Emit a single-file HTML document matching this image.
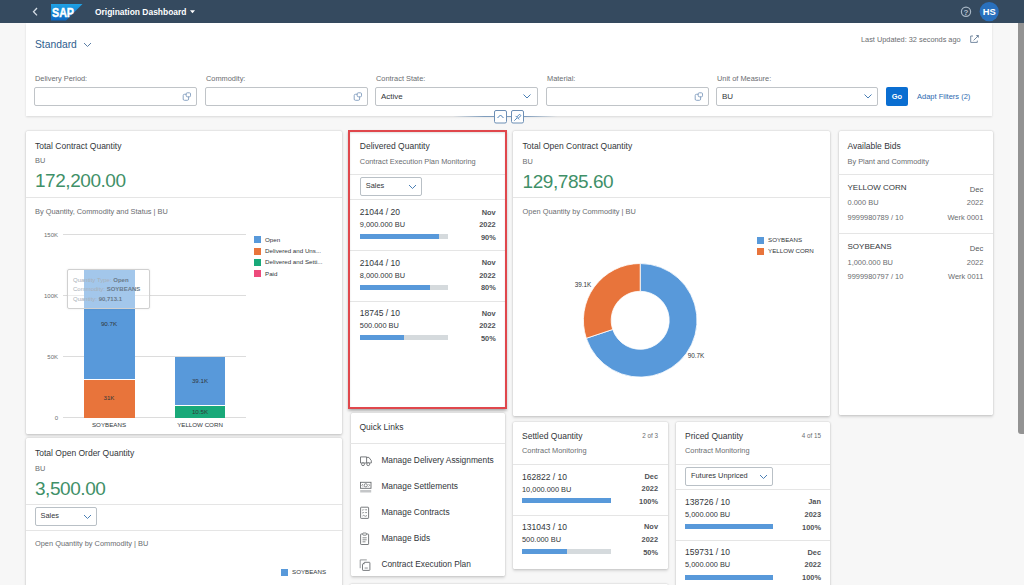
<!DOCTYPE html>
<html><head><meta charset="utf-8">
<style>
*{box-sizing:border-box;margin:0;padding:0}
html,body{width:1024px;height:585px;overflow:hidden}
body{background:#f7f7f7;font-family:"Liberation Sans",sans-serif;color:#32363a;position:relative}
.a{position:absolute}
.hdr{left:0;top:0;width:1024px;height:23px;background:#354a5f}
.fb{left:26px;top:23px;width:966px;height:93px;background:#fff;box-shadow:0 1px 2px rgba(0,0,0,.12)}
.sb{left:1018px;top:23px;width:6px;height:411px;background:#939393;border-bottom-left-radius:3px}
.card{position:absolute;background:#fff;border-radius:1.5px;box-shadow:0 0 2px rgba(0,0,0,.2),0 1.5px 3px rgba(0,0,0,.13)}
.lbl{font-size:7.4px;color:#6a6d70}
.inp{position:absolute;height:19px;border:1px solid #c0c4c8;background:#fff;border-radius:2px}
.t{position:absolute;white-space:nowrap}
.title{font-size:9px;color:#32363a}
.sub{font-size:7.5px;color:#6a6d70}
.kpi{font-size:19px;color:#3c9a63}
.sep{position:absolute;height:1px;background:#e5e5e5}
</style></head><body>
<div class="a hdr"></div>
<svg class="a" style="left:0;top:0" width="1024" height="23">
<polyline points="37,8 33.5,11.7 37,15.4" fill="none" stroke="#d5dde5" stroke-width="1.3"/>
<defs><linearGradient id="sapg" x1="0" y1="0" x2="0" y2="1"><stop offset="0" stop-color="#1fa3e6"/><stop offset="1" stop-color="#0d67c2"/></linearGradient></defs>
<polygon points="51,4 82.5,4 66,20.6 51,20.6" fill="url(#sapg)"/>
<text x="52" y="17" font-family="Liberation Sans" font-weight="bold" font-size="13" fill="#fff" textLength="22" lengthAdjust="spacingAndGlyphs" stroke="#fff" stroke-width="0.45">SAP</text>
<text x="95" y="14.5" font-family="Liberation Sans" font-weight="bold" font-size="8.45" fill="#ffffff">Origination Dashboard</text>
<polygon points="190,10.3 195,10.3 192.5,13.3" fill="#fff"/>
<circle cx="966" cy="11.7" r="4.6" fill="none" stroke="#a9b8c6" stroke-width="1.2"/>
<text x="966" y="14.6" text-anchor="middle" font-family="Liberation Sans" font-weight="bold" font-size="8" fill="#b5c2cf">?</text>
<circle cx="989.2" cy="11.6" r="9.6" fill="#2970bd"/>
<text x="989.2" y="15.1" text-anchor="middle" font-family="Liberation Sans" font-weight="bold" font-size="9.4" fill="#fff">HS</text>
</svg>
<div class="a fb"></div>
<div class="t" style="left:35px;top:39px;font-size:10.3px;color:#2e5d8e">Standard</div>
<svg class="a" style="left:83px;top:42px" width="10" height="6"><polyline points="1,1 4.5,4.5 8,1" fill="none" stroke="#5b7ea6" stroke-width="1"/></svg>
<div class="t" style="left:861px;top:35px;font-size:7.35px;color:#6a6d70">Last Updated: 32 seconds ago</div>
<svg class="a" style="left:969px;top:34px" width="12" height="11"><path d="M4,2 H1.7 V8.4 H8.3 V6.6" fill="none" stroke="#5f7691" stroke-width="0.85"/><path d="M4.6,6.4 L8.6,2.4" stroke="#5f7691" stroke-width="0.85"/><polygon points="6.8,1.3 9.8,1.1 9.6,4.1" fill="#5f7691"/></svg>
<div class="t lbl" style="left:35px;top:74px">Delivery Period:</div>
<div class="t lbl" style="left:206px;top:74px">Commodity:</div>
<div class="t lbl" style="left:376px;top:74px">Contract State:</div>
<div class="t lbl" style="left:547px;top:74px">Material:</div>
<div class="t lbl" style="left:717px;top:74px">Unit of Measure:</div>
<div class="inp" style="left:34px;top:87px;width:163px"></div>
<div class="inp" style="left:205px;top:87px;width:163px"></div>
<div class="inp" style="left:375px;top:87px;width:163px"></div>
<div class="inp" style="left:546px;top:87px;width:163px"></div>
<div class="inp" style="left:716px;top:87px;width:162px"></div>
<svg class="a" style="left:181px;top:90px" width="12" height="12"><rect x="2.2" y="4.3" width="5.4" height="6" rx="1.2" fill="none" stroke="#7f9bbd" stroke-width="0.9"/><rect x="5.2" y="2.8" width="4.3" height="4" rx="1" fill="#fff" stroke="#7f9bbd" stroke-width="0.9"/></svg>
<svg class="a" style="left:352px;top:90px" width="12" height="12"><rect x="2.2" y="4.3" width="5.4" height="6" rx="1.2" fill="none" stroke="#7f9bbd" stroke-width="0.9"/><rect x="5.2" y="2.8" width="4.3" height="4" rx="1" fill="#fff" stroke="#7f9bbd" stroke-width="0.9"/></svg>
<svg class="a" style="left:693px;top:90px" width="12" height="12"><rect x="2.2" y="4.3" width="5.4" height="6" rx="1.2" fill="none" stroke="#7f9bbd" stroke-width="0.9"/><rect x="5.2" y="2.8" width="4.3" height="4" rx="1" fill="#fff" stroke="#7f9bbd" stroke-width="0.9"/></svg>
<svg class="a" style="left:522px;top:93px" width="10" height="7"><polyline points="1.5,1.5 5,5 8.5,1.5" fill="none" stroke="#4a7fb5" stroke-width="1"/></svg>
<svg class="a" style="left:863px;top:93px" width="10" height="7"><polyline points="1.5,1.5 5,5 8.5,1.5" fill="none" stroke="#4a7fb5" stroke-width="1"/></svg>
<div class="t" style="left:381px;top:92px;font-size:8px;color:#32363a">Active</div>
<div class="t" style="left:722px;top:92px;font-size:8px;color:#32363a">BU</div>
<div class="a" style="left:886px;top:87px;width:22px;height:19px;background:#0a6ed1;border-radius:2px;color:#fff;font-size:7.5px;font-weight:bold;text-align:center;line-height:19px">Go</div>
<div class="t" style="left:917px;top:92px;font-size:7.5px;color:#2d6ab0">Adapt Filters (2)</div>
<div class="a" style="left:453px;top:116px;width:104px;height:1.2px;background:linear-gradient(90deg,rgba(120,150,185,0),#7f9dbd 30%,#7f9dbd 70%,rgba(120,150,185,0))"></div>
<svg class="a" style="left:494px;top:110px" width="32" height="14"><rect x="0.5" y="0.5" width="12" height="12.5" rx="1.5" fill="#fff" stroke="#6d8fb5" stroke-width="1"/><polyline points="3.5,8 6.5,5 9.5,8" fill="none" stroke="#4a7fb5" stroke-width="1"/><rect x="17.5" y="0.5" width="12" height="12.5" rx="1.5" fill="#fff" stroke="#6d8fb5" stroke-width="1"/><path d="M20.3,10.7 L23,8" stroke="#4a7fb5" stroke-width="0.9"/><path d="M21.6,5.9 L25.1,9.4" stroke="#4a7fb5" stroke-width="0.9"/><path d="M22.8,7 L25.6,4.2 L27,5.6 L24.1,8.3" fill="none" stroke="#4a7fb5" stroke-width="0.9"/></svg>

<div class="a sb"></div>

<div class="card" style="left:26px;top:131px;width:316px;height:303px"></div>
<div class="t" style="top:142.15px;font-size:8.5px;line-height:8.5px;color:#32363a;left:35px;">Total Contract Quantity</div>
<div class="t" style="top:157.30px;font-size:7.4px;line-height:7.4px;color:#6a6d70;left:35px;">BU</div>
<div class="t" style="top:171.40px;font-size:19px;line-height:19px;color:#3f9068;left:35px;letter-spacing:-0.45px;">172,200.00</div>
<div class="a" style="left:26px;top:196.5px;width:316px;height:1px;background:#e5e5e5;"></div>
<div class="t" style="top:207.60px;font-size:7.4px;line-height:7.4px;color:#6a6d70;left:35px;">By Quantity, Commodity and Status | BU</div>
<div class="a" style="left:63px;top:234.1px;width:183px;height:1px;background:#dcdcdc;"></div>
<div class="t" style="top:231.60px;font-size:6px;line-height:6px;color:#6a6d70;right:966px;">150K</div>
<div class="a" style="left:63px;top:295.1px;width:183px;height:1px;background:#dcdcdc;"></div>
<div class="t" style="top:292.60px;font-size:6px;line-height:6px;color:#6a6d70;right:966px;">100K</div>
<div class="a" style="left:63px;top:356.3px;width:183px;height:1px;background:#dcdcdc;"></div>
<div class="t" style="top:353.80px;font-size:6px;line-height:6px;color:#6a6d70;right:966px;">50K</div>
<div class="a" style="left:63px;top:417.3px;width:183px;height:1px;background:#dcdcdc;"></div>
<div class="t" style="top:414.80px;font-size:6px;line-height:6px;color:#6a6d70;right:966px;">0</div>
<div class="a" style="left:83.7px;top:269px;width:51px;height:87.5px;background:#5899da;"></div>
<div class="a" style="left:83.7px;top:269px;width:51px;height:110px;background:#5899da;"></div>
<div class="a" style="left:83.7px;top:380px;width:51px;height:38px;background:#e8743b;"></div>
<div class="a" style="left:175px;top:357.2px;width:50px;height:47.5px;background:#5899da;"></div>
<div class="a" style="left:175px;top:405.5px;width:50px;height:12.5px;background:#19a979;"></div>
<div class="t" style="top:321.10px;font-size:6.2px;line-height:6.2px;color:#32363a;left:-41px;width:300px;text-align:center;">90.7K</div>
<div class="t" style="top:395.30px;font-size:6.2px;line-height:6.2px;color:#32363a;left:-41px;width:300px;text-align:center;">31K</div>
<div class="t" style="top:377.70px;font-size:6.2px;line-height:6.2px;color:#32363a;left:50px;width:300px;text-align:center;">39.1K</div>
<div class="t" style="top:408.90px;font-size:6.2px;line-height:6.2px;color:#32363a;left:50px;width:300px;text-align:center;">10.5K</div>
<div class="t" style="top:422.40px;font-size:6.2px;line-height:6.2px;color:#32363a;left:-41px;width:300px;text-align:center;">SOYBEANS</div>
<div class="t" style="top:422.40px;font-size:6.2px;line-height:6.2px;color:#32363a;left:50px;width:300px;text-align:center;">YELLOW CORN</div>
<div class="a" style="left:67px;top:269.4px;width:83.3px;height:39.8px;background:rgba(255,255,255,0.45);border:1px solid #d0d0d0;border-radius:2px;box-shadow:0 0 2px rgba(0,0,0,.1)"></div>
<div class="t" style="top:276.50px;font-size:6px;line-height:6px;color:#a9b0b8;left:73px;">Quantity Type: <b style="color:#6a7a8a">Open</b></div>
<div class="t" style="top:286.20px;font-size:6px;line-height:6px;color:#a9b0b8;left:73px;">Commodity: <b style="color:#6a7a8a">SOYBEANS</b></div>
<div class="t" style="top:296.00px;font-size:6px;line-height:6px;color:#a9b0b8;left:73px;">Quantity: <b style="color:#6a7a8a">90,713.1</b></div>
<div class="a" style="left:254px;top:236.3px;width:7px;height:7px;background:#5899da;"></div>
<div class="t" style="top:236.80px;font-size:6.2px;line-height:6.2px;color:#32363a;left:265px;">Open</div>
<div class="a" style="left:254px;top:247.55px;width:7px;height:7px;background:#e8743b;"></div>
<div class="t" style="top:248.05px;font-size:6.2px;line-height:6.2px;color:#32363a;left:265px;">Delivered and Uns...</div>
<div class="a" style="left:254px;top:258.8px;width:7px;height:7px;background:#19a979;"></div>
<div class="t" style="top:259.30px;font-size:6.2px;line-height:6.2px;color:#32363a;left:265px;">Delivered and Setti...</div>
<div class="a" style="left:254px;top:270.05px;width:7px;height:7px;background:#ed4a7b;"></div>
<div class="t" style="top:270.55px;font-size:6.2px;line-height:6.2px;color:#32363a;left:265px;">Paid</div>
<div class="card" style="left:350px;top:131px;width:155px;height:277px"></div>
<div class="t" style="top:141.85px;font-size:8.5px;line-height:8.5px;color:#32363a;left:359.8px;">Delivered Quantity</div>
<div class="t" style="top:157.70px;font-size:7.4px;line-height:7.4px;color:#6a6d70;left:359.8px;">Contract Execution Plan Monitoring</div>
<div class="a" style="left:350px;top:173.5px;width:155px;height:1px;background:#e5e5e5;"></div>
<div class="a" style="left:359.8px;top:176.6px;width:62.5px;height:19.1px;border:1px solid #b9c0c6;border-radius:2px;background:#fff"></div>
<div class="t" style="top:182.45px;font-size:7.4px;line-height:7.4px;color:#32363a;left:365.8px;">Sales</div>
<svg class="a" style="left:408.3px;top:183.65px" width="9" height="6"><polyline points="1,1 4.5,4.5 8,1" fill="none" stroke="#4a7fb5" stroke-width="1"/></svg>
<div class="a" style="left:350px;top:199.2px;width:155px;height:1px;background:#e5e5e5;"></div>
<div class="t" style="top:208.05px;font-size:8.5px;line-height:8.5px;color:#32363a;left:359.8px;">21044 / 20</div>
<div class="t" style="top:221.00px;font-size:7.4px;line-height:7.4px;color:#32363a;left:359.8px;">9,000.000 BU</div>
<div class="a" style="left:359.8px;top:234.0px;width:88.2px;height:5px;background:#d5dadd;"></div>
<div class="a" style="left:359.8px;top:234.0px;width:79.38000000000001px;height:5px;background:#5899da;"></div>
<div class="t" style="top:208.60px;font-size:7.4px;line-height:7.4px;color:#32363a;font-weight:bold;right:528.3px;color:#4f5256;">Nov</div>
<div class="t" style="top:221.00px;font-size:7.4px;line-height:7.4px;color:#32363a;font-weight:bold;right:528.3px;color:#4f5256;">2022</div>
<div class="t" style="top:233.50px;font-size:7.4px;line-height:7.4px;color:#32363a;font-weight:bold;right:528.3px;color:#4f5256;">90%</div>
<div class="a" style="left:350px;top:250.0px;width:155px;height:1px;background:#e5e5e5;"></div>
<div class="t" style="top:258.55px;font-size:8.5px;line-height:8.5px;color:#32363a;left:359.8px;">21044 / 10</div>
<div class="t" style="top:271.50px;font-size:7.4px;line-height:7.4px;color:#32363a;left:359.8px;">8,000.000 BU</div>
<div class="a" style="left:359.8px;top:284.5px;width:88.2px;height:5px;background:#d5dadd;"></div>
<div class="a" style="left:359.8px;top:284.5px;width:70.56px;height:5px;background:#5899da;"></div>
<div class="t" style="top:259.10px;font-size:7.4px;line-height:7.4px;color:#32363a;font-weight:bold;right:528.3px;color:#4f5256;">Nov</div>
<div class="t" style="top:271.50px;font-size:7.4px;line-height:7.4px;color:#32363a;font-weight:bold;right:528.3px;color:#4f5256;">2022</div>
<div class="t" style="top:284.00px;font-size:7.4px;line-height:7.4px;color:#32363a;font-weight:bold;right:528.3px;color:#4f5256;">80%</div>
<div class="a" style="left:350px;top:300.5px;width:155px;height:1px;background:#e5e5e5;"></div>
<div class="t" style="top:309.05px;font-size:8.5px;line-height:8.5px;color:#32363a;left:359.8px;">18745 / 10</div>
<div class="t" style="top:322.00px;font-size:7.4px;line-height:7.4px;color:#32363a;left:359.8px;">500.000 BU</div>
<div class="a" style="left:359.8px;top:335.0px;width:88.2px;height:5px;background:#d5dadd;"></div>
<div class="a" style="left:359.8px;top:335.0px;width:44.1px;height:5px;background:#5899da;"></div>
<div class="t" style="top:309.60px;font-size:7.4px;line-height:7.4px;color:#32363a;font-weight:bold;right:528.3px;color:#4f5256;">Nov</div>
<div class="t" style="top:322.00px;font-size:7.4px;line-height:7.4px;color:#32363a;font-weight:bold;right:528.3px;color:#4f5256;">2022</div>
<div class="t" style="top:334.50px;font-size:7.4px;line-height:7.4px;color:#32363a;font-weight:bold;right:528.3px;color:#4f5256;">50%</div>
<div class="a" style="left:348px;top:130px;width:159px;height:279px;border:2.5px solid #e0474c;box-shadow:0 1.5px 2.5px rgba(0,0,0,.22), inset 0 1px 2px rgba(0,0,0,.12)"></div>
<div class="card" style="left:513px;top:131px;width:316.5px;height:284.5px"></div>
<div class="t" style="top:141.95px;font-size:8.5px;line-height:8.5px;color:#32363a;left:522.6px;">Total Open Contract Quantity</div>
<div class="t" style="top:157.60px;font-size:7.4px;line-height:7.4px;color:#6a6d70;left:522.6px;">BU</div>
<div class="t" style="top:171.50px;font-size:19px;line-height:19px;color:#3f9068;left:522.6px;letter-spacing:-0.45px;">129,785.60</div>
<div class="a" style="left:513px;top:196.8px;width:317px;height:1px;background:#e5e5e5;"></div>
<div class="t" style="top:208.10px;font-size:7.4px;line-height:7.4px;color:#6a6d70;left:522.6px;">Open Quantity by Commodity | BU</div>
<div class="a" style="left:757px;top:236.5px;width:7px;height:7px;background:#5899da;"></div>
<div class="t" style="top:236.90px;font-size:6.2px;line-height:6.2px;color:#32363a;left:768px;">SOYBEANS</div>
<div class="a" style="left:757px;top:247.6px;width:7px;height:7px;background:#e8743b;"></div>
<div class="t" style="top:248.00px;font-size:6.2px;line-height:6.2px;color:#32363a;left:768px;">YELLOW CORN</div>
<svg class="a" style="left:0;top:0" width="1024" height="585"><path d="M640.20,263.50 A56.8,56.8 0 1 1 586.32,338.27 L612.69,329.47 A29,29 0 1 0 640.20,291.30 Z" fill="#5899da" stroke="#fff" stroke-width="0.8"/><path d="M586.32,338.27 A56.8,56.8 0 0 1 640.20,263.50 L640.20,291.30 A29,29 0 0 0 612.69,329.47 Z" fill="#e8743b" stroke="#fff" stroke-width="0.8"/></svg>
<div class="t" style="top:282.40px;font-size:6.4px;line-height:6.4px;color:#32363a;left:433px;width:300px;text-align:center;">39.1K</div>
<div class="t" style="top:352.80px;font-size:6.4px;line-height:6.4px;color:#32363a;left:546px;width:300px;text-align:center;">90.7K</div>
<div class="card" style="left:838.5px;top:131px;width:154.5px;height:283.5px"></div>
<div class="t" style="top:141.95px;font-size:8.5px;line-height:8.5px;color:#32363a;left:847.5px;">Available Bids</div>
<div class="t" style="top:157.60px;font-size:7.4px;line-height:7.4px;color:#6a6d70;left:847.5px;">By Plant and Commodity</div>
<div class="a" style="left:838px;top:173.6px;width:155px;height:1px;background:#e5e5e5;"></div>
<div class="t" style="top:184.00px;font-size:8.0px;line-height:8.0px;color:#32363a;left:847.5px;">YELLOW CORN</div>
<div class="t" style="top:185.50px;font-size:7.6px;line-height:7.6px;color:#55585b;right:40.700000000000045px;">Dec</div>
<div class="t" style="top:199.47px;font-size:7.45px;line-height:7.45px;color:#6a6d70;left:847.5px;">0.000 BU</div>
<div class="t" style="top:199.47px;font-size:7.45px;line-height:7.45px;color:#6a6d70;right:40.700000000000045px;">2022</div>
<div class="t" style="top:214.08px;font-size:7.45px;line-height:7.45px;color:#6a6d70;left:847.5px;">9999980789 / 10</div>
<div class="t" style="top:214.08px;font-size:7.45px;line-height:7.45px;color:#6a6d70;right:40.700000000000045px;">Werk 0001</div>
<div class="a" style="left:838px;top:233.2px;width:155px;height:1px;background:#e5e5e5;"></div>
<div class="t" style="top:243.20px;font-size:8.0px;line-height:8.0px;color:#32363a;left:847.5px;">SOYBEANS</div>
<div class="t" style="top:244.70px;font-size:7.6px;line-height:7.6px;color:#55585b;right:40.700000000000045px;">Dec</div>
<div class="t" style="top:258.67px;font-size:7.45px;line-height:7.45px;color:#6a6d70;left:847.5px;">1,000.000 BU</div>
<div class="t" style="top:258.67px;font-size:7.45px;line-height:7.45px;color:#6a6d70;right:40.700000000000045px;">2022</div>
<div class="t" style="top:273.27px;font-size:7.45px;line-height:7.45px;color:#6a6d70;left:847.5px;">9999980797 / 10</div>
<div class="t" style="top:273.27px;font-size:7.45px;line-height:7.45px;color:#6a6d70;right:40.700000000000045px;">Werk 0011</div>
<div class="card" style="left:26px;top:438px;width:316px;height:160px"></div>
<div class="t" style="top:448.75px;font-size:8.5px;line-height:8.5px;color:#32363a;left:35px;">Total Open Order Quantity</div>
<div class="t" style="top:464.80px;font-size:7.4px;line-height:7.4px;color:#6a6d70;left:35px;">BU</div>
<div class="t" style="top:478.50px;font-size:19px;line-height:19px;color:#3f9068;left:35px;letter-spacing:-0.45px;">3,500.00</div>
<div class="a" style="left:26px;top:503.8px;width:316px;height:1px;background:#e5e5e5;"></div>
<div class="a" style="left:34.5px;top:506.5px;width:62.5px;height:19px;border:1px solid #b9c0c6;border-radius:2px;background:#fff"></div>
<div class="t" style="top:512.30px;font-size:7.4px;line-height:7.4px;color:#32363a;left:40.5px;">Sales</div>
<svg class="a" style="left:83.0px;top:513.5px" width="9" height="6"><polyline points="1,1 4.5,4.5 8,1" fill="none" stroke="#4a7fb5" stroke-width="1"/></svg>
<div class="a" style="left:26px;top:529.8px;width:316px;height:1px;background:#e5e5e5;"></div>
<div class="t" style="top:540.30px;font-size:7.4px;line-height:7.4px;color:#6a6d70;left:35px;">Open Quantity by Commodity | BU</div>
<div class="a" style="left:281px;top:569px;width:7px;height:7px;background:#5899da;"></div>
<div class="t" style="top:569.40px;font-size:6.2px;line-height:6.2px;color:#32363a;left:292px;">SOYBEANS</div>
<div class="card" style="left:351px;top:413px;width:154px;height:162.5px"></div>
<div class="t" style="top:423.25px;font-size:8.5px;line-height:8.5px;color:#32363a;left:359.5px;">Quick Links</div>
<div class="a" style="left:350px;top:442.5px;width:155px;height:1px;background:#e5e5e5;"></div>
<svg class="a" style="left:359px;top:452.8px" width="14" height="15"><path d="M1.5,10 V3.9 H7.6 V10" fill="none" stroke="#6a6d70" stroke-width="0.9"/><path d="M7.6,4.4 H9.9 L12.3,7.6 V10 H1.5" fill="none" stroke="#6a6d70" stroke-width="0.9"/><circle cx="4" cy="11.2" r="1.45" fill="#fff" stroke="#6a6d70" stroke-width="0.9"/><circle cx="9.2" cy="11.2" r="1.45" fill="#fff" stroke="#6a6d70" stroke-width="0.9"/></svg>
<div class="t" style="top:455.62px;font-size:8.35px;line-height:8.35px;color:#32363a;left:381.4px;">Manage Delivery Assignments</div>
<svg class="a" style="left:359px;top:478.9px" width="14" height="15"><rect x="1.5" y="3.3" width="10.5" height="6" fill="none" stroke="#6a6d70" stroke-width="0.9"/><circle cx="6.75" cy="6.3" r="1.6" fill="none" stroke="#6a6d70" stroke-width="0.8"/><path d="M4,5 L2.8,6.3 L4,7.6 M9.5,5 L10.7,6.3 L9.5,7.6" fill="none" stroke="#6a6d70" stroke-width="0.7"/><rect x="1.2" y="11" width="11" height="2.5" fill="#c4c6c8"/></svg>
<div class="t" style="top:481.73px;font-size:8.35px;line-height:8.35px;color:#32363a;left:381.4px;">Manage Settlements</div>
<svg class="a" style="left:359px;top:505.0px" width="14" height="15"><rect x="1.6" y="2.2" width="8" height="11.2" rx="0.6" fill="none" stroke="#6a6d70" stroke-width="0.9"/><path d="M3.3,4.8 L4,5.4 L5,4.3 M6.2,4.8 H8 M3.3,7.6 L4,8.2 L5,7.1 M6.2,7.6 H8 M3.5,11 Q4.5,9.8 5.5,10.8 T8,10.5" fill="none" stroke="#6a6d70" stroke-width="0.75"/></svg>
<div class="t" style="top:507.82px;font-size:8.35px;line-height:8.35px;color:#32363a;left:381.4px;">Manage Contracts</div>
<svg class="a" style="left:359px;top:531.1px" width="14" height="15"><rect x="1.6" y="3" width="8" height="10.5" rx="0.6" fill="none" stroke="#6a6d70" stroke-width="0.9"/><rect x="3.8" y="2" width="3.6" height="2.2" rx="0.5" fill="#fff" stroke="#6a6d70" stroke-width="0.8"/><path d="M3.5,6.8 H7.7 M3.5,8.8 H7.7 M3.5,10.8 H6.5" stroke="#6a6d70" stroke-width="0.8"/></svg>
<div class="t" style="top:533.93px;font-size:8.35px;line-height:8.35px;color:#32363a;left:381.4px;">Manage Bids</div>
<svg class="a" style="left:359px;top:557.2px" width="14" height="15"><path d="M1.2,11.2 V2.9 H7.8" fill="none" stroke="#8a8d90" stroke-width="0.9"/><path d="M5.5,5.3 H10.3 Q10.9,5.3 10.9,5.9 V12.8 Q10.9,13.4 10.3,13.4 H4.1 Q3.5,13.4 3.5,12.8 V7.3 Z" fill="none" stroke="#6a6d70" stroke-width="0.9"/><path d="M3.6,7.3 L5.5,5.3 V7.3 Z" fill="#6a6d70"/><rect x="5.6" y="10.3" width="3.2" height="1.5" fill="#b4b6b8"/></svg>
<div class="t" style="top:560.03px;font-size:8.35px;line-height:8.35px;color:#32363a;left:381.4px;">Contract Execution Plan</div>
<div class="card" style="left:513px;top:421.5px;width:155px;height:147px"></div>
<div class="t" style="top:431.75px;font-size:8.5px;line-height:8.5px;color:#32363a;left:522px;">Settled Quantity</div>
<div class="t" style="top:432.85px;font-size:6.3px;line-height:6.3px;color:#6a6d70;right:366px;">2 of 3</div>
<div class="t" style="top:447.30px;font-size:7.4px;line-height:7.4px;color:#6a6d70;left:522px;">Contract Monitoring</div>
<div class="a" style="left:513px;top:464px;width:155px;height:1px;background:#e5e5e5;"></div>
<div class="t" style="top:472.75px;font-size:8.5px;line-height:8.5px;color:#32363a;left:522px;">162822 / 10</div>
<div class="t" style="top:485.50px;font-size:7.4px;line-height:7.4px;color:#32363a;left:522px;">10,000.000 BU</div>
<div class="a" style="left:522px;top:498.0px;width:89px;height:5px;background:#d5dadd;"></div>
<div class="a" style="left:522px;top:498.0px;width:89px;height:5px;background:#5899da;"></div>
<div class="t" style="top:472.80px;font-size:7.4px;line-height:7.4px;color:#32363a;font-weight:bold;right:366px;color:#4f5256;">Dec</div>
<div class="t" style="top:485.30px;font-size:7.4px;line-height:7.4px;color:#32363a;font-weight:bold;right:366px;color:#4f5256;">2022</div>
<div class="t" style="top:498.10px;font-size:7.4px;line-height:7.4px;color:#32363a;font-weight:bold;right:366px;color:#4f5256;">100%</div>
<div class="a" style="left:513px;top:514.8px;width:155px;height:1px;background:#e5e5e5;"></div>
<div class="t" style="top:523.25px;font-size:8.5px;line-height:8.5px;color:#32363a;left:522px;">131043 / 10</div>
<div class="t" style="top:536.00px;font-size:7.4px;line-height:7.4px;color:#32363a;left:522px;">500.000 BU</div>
<div class="a" style="left:522px;top:548.5px;width:89px;height:5px;background:#d5dadd;"></div>
<div class="a" style="left:522px;top:548.5px;width:44.5px;height:5px;background:#5899da;"></div>
<div class="t" style="top:523.30px;font-size:7.4px;line-height:7.4px;color:#32363a;font-weight:bold;right:366px;color:#4f5256;">Nov</div>
<div class="t" style="top:535.80px;font-size:7.4px;line-height:7.4px;color:#32363a;font-weight:bold;right:366px;color:#4f5256;">2022</div>
<div class="t" style="top:548.60px;font-size:7.4px;line-height:7.4px;color:#32363a;font-weight:bold;right:366px;color:#4f5256;">50%</div>
<div class="card" style="left:350px;top:584px;width:318px;height:40px"></div>
<div class="card" style="left:676px;top:421.5px;width:154px;height:180px"></div>
<div class="t" style="top:431.75px;font-size:8.5px;line-height:8.5px;color:#32363a;left:685px;">Priced Quantity</div>
<div class="t" style="top:432.85px;font-size:6.3px;line-height:6.3px;color:#6a6d70;right:203px;">4 of 15</div>
<div class="t" style="top:447.30px;font-size:7.4px;line-height:7.4px;color:#6a6d70;left:685px;">Contract Monitoring</div>
<div class="a" style="left:676px;top:464px;width:154px;height:1px;background:#e5e5e5;"></div>
<div class="a" style="left:685px;top:466.5px;width:88px;height:19px;border:1px solid #b9c0c6;border-radius:2px;background:#fff"></div>
<div class="t" style="top:472.30px;font-size:7.4px;line-height:7.4px;color:#32363a;left:691px;">Futures Unpriced</div>
<svg class="a" style="left:759px;top:473.5px" width="9" height="6"><polyline points="1,1 4.5,4.5 8,1" fill="none" stroke="#4a7fb5" stroke-width="1"/></svg>
<div class="a" style="left:676px;top:489px;width:154px;height:1px;background:#e5e5e5;"></div>
<div class="t" style="top:497.75px;font-size:8.5px;line-height:8.5px;color:#32363a;left:685px;">138726 / 10</div>
<div class="t" style="top:510.60px;font-size:7.4px;line-height:7.4px;color:#32363a;left:685px;">5,000.000 BU</div>
<div class="a" style="left:685px;top:524.0px;width:88px;height:5px;background:#5899da;"></div>
<div class="t" style="top:498.30px;font-size:7.4px;line-height:7.4px;color:#32363a;font-weight:bold;right:203px;color:#4f5256;">Jan</div>
<div class="t" style="top:510.80px;font-size:7.4px;line-height:7.4px;color:#32363a;font-weight:bold;right:203px;color:#4f5256;">2023</div>
<div class="t" style="top:523.60px;font-size:7.4px;line-height:7.4px;color:#32363a;font-weight:bold;right:203px;color:#4f5256;">100%</div>
<div class="a" style="left:676px;top:540px;width:154px;height:1px;background:#e5e5e5;"></div>
<div class="t" style="top:548.25px;font-size:8.5px;line-height:8.5px;color:#32363a;left:685px;">159731 / 10</div>
<div class="t" style="top:561.10px;font-size:7.4px;line-height:7.4px;color:#32363a;left:685px;">5,000.000 BU</div>
<div class="a" style="left:685px;top:574.5px;width:88px;height:5px;background:#5899da;"></div>
<div class="t" style="top:548.80px;font-size:7.4px;line-height:7.4px;color:#32363a;font-weight:bold;right:203px;color:#4f5256;">Dec</div>
<div class="t" style="top:561.30px;font-size:7.4px;line-height:7.4px;color:#32363a;font-weight:bold;right:203px;color:#4f5256;">2022</div>
<div class="t" style="top:574.10px;font-size:7.4px;line-height:7.4px;color:#32363a;font-weight:bold;right:203px;color:#4f5256;">100%</div>
</body></html>
